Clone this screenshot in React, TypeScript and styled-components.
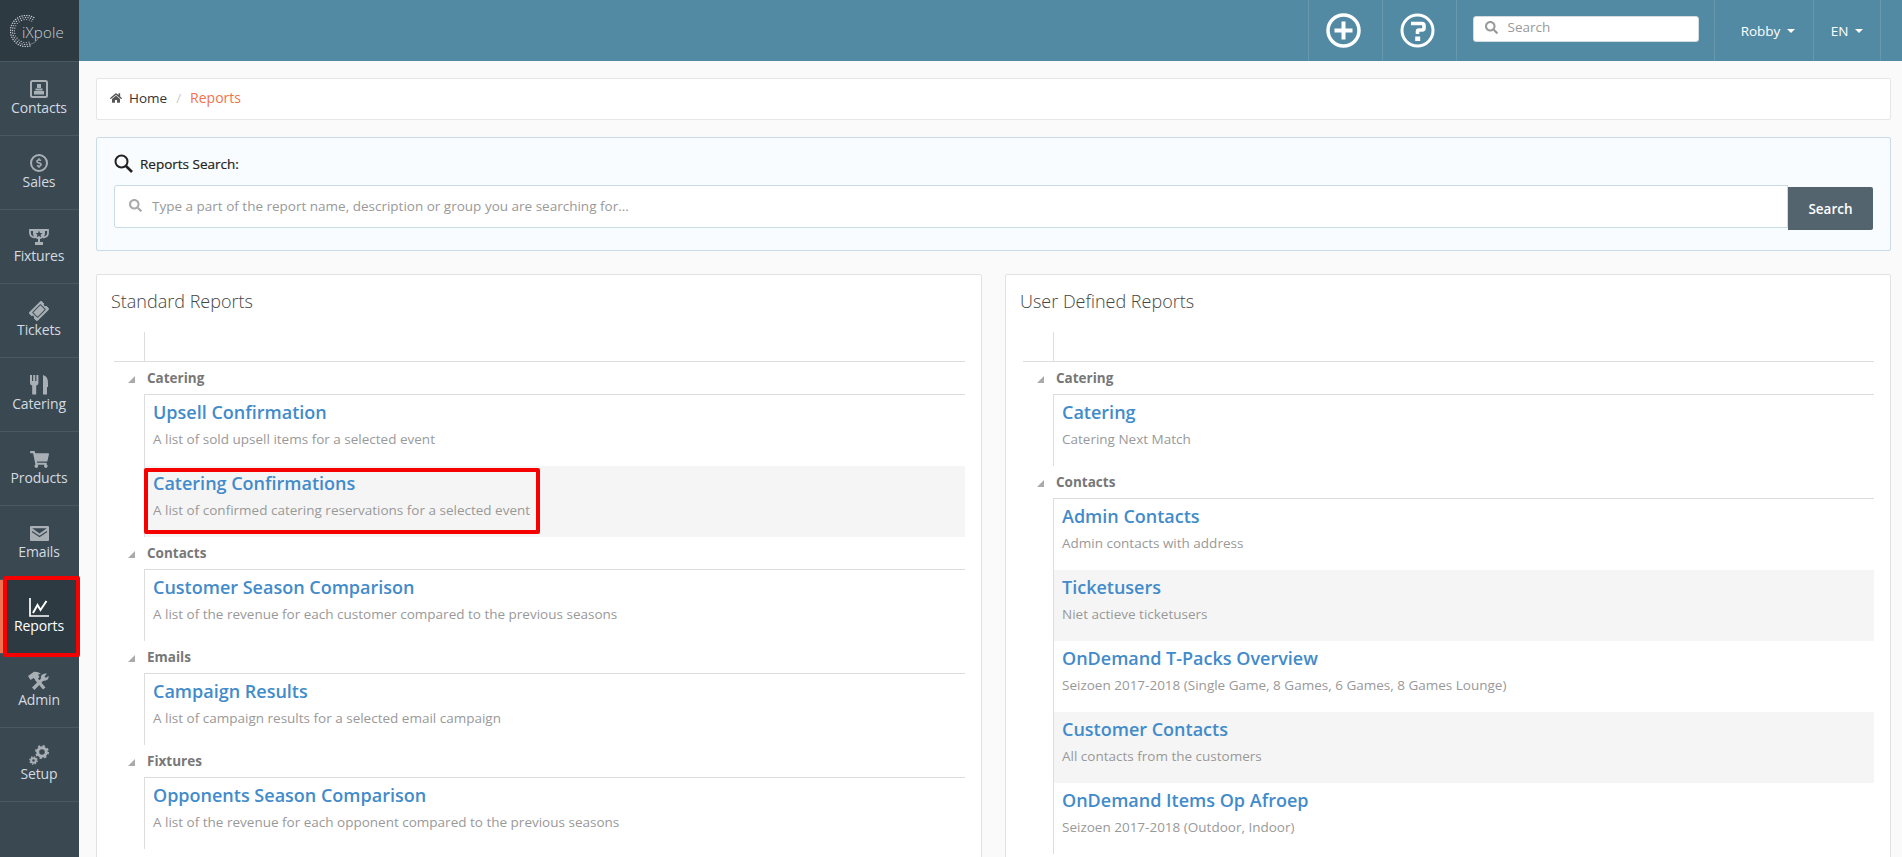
import styled, { createGlobalStyle } from "styled-components";
import { ReactNode } from "react";
import {
  FaDollarSign,
  FaHome,
  FaSearch,
  FaShoppingCart,
  FaTicketAlt,
} from "react-icons/fa";

const GlobalStyle = createGlobalStyle`
  html, body {
    margin: 0;
    height: 100%;
    background: #fafafa;
    font-family: "Open Sans", "Liberation Sans", sans-serif;
    font-size: 13.5px;
    color: #333;
  }
  * {
    box-sizing: border-box;
  }
`;

const Page = styled.div`
  display: flex;
  width: 100%;
  height: 857px;
  overflow: hidden;
`;

const Sidebar = styled.nav`
  flex: 0 0 79px;
  background: #3a4852;
  position: relative;
  z-index: 2;
`;

const LogoCell = styled.div`
  height: 62px;
  background: #2e3a42;
  display: flex;
  align-items: center;
  padding: 0 0 0 10px;
  border-bottom: 1px solid #4a5862;
  position: relative;
`;

const LogoText = styled.span`
  position: absolute;
  left: 22px;
  top: 22px;
  font-family: "Open Sans", sans-serif;
  font-weight: 300;
  font-size: 15px;
  line-height: 20px;
  letter-spacing: 0.2px;
  color: #c9ced2;
`;

const NavItem = styled.a<{ $active?: boolean }>`
  display: flex;
  flex-direction: column;
  align-items: center;
  height: 74px;
  padding: 18px 1px 0 0;
  border-bottom: 1px solid #4a5862;
  position: relative;
  font-size: 14px;
  line-height: 19px;
  letter-spacing: -0.15px;
  color: ${(p) => (p.$active ? "#fff" : "#d3dbe0")};
  background: ${(p) => (p.$active ? "#2e3a42" : "transparent")};
  box-shadow: ${(p) => (p.$active ? "inset 3px 0 0 #ef7350" : "none")};
  svg {
    display: block;
  }
`;

const NavIcon = styled.span<{ $active?: boolean }>`
  display: flex;
  align-items: center;
  justify-content: center;
  width: 24px;
  height: 18px;
  color: ${(p) => (p.$active ? "#fff" : "#a9b0b5")};
`;

const Ring = styled.span`
  display: flex;
  align-items: center;
  justify-content: center;
  width: 18px;
  height: 18px;
  border: 2px solid currentColor;
  border-radius: 50%;
`;

const TiltedTicket = styled(FaTicketAlt)`
  transform: rotate(-45deg);
`;

const RedFrame = styled.span`
  position: absolute;
  border: 4px solid #f70000;
  border-radius: 2px;
  pointer-events: none;
`;

const NavFrame = styled(RedFrame)`
  left: 3px;
  top: -4px;
  width: 77px;
  height: 81px;
`;

const Main = styled.main`
  flex: 1;
  min-width: 0;
`;

const TopBar = styled.header`
  height: 61px;
  background: #528aa3;
  display: flex;
  justify-content: flex-end;
  padding-right: 21px;
`;

const TopCell = styled.div<{ $w: number; $shift?: number }>`
  flex: 0 0 ${(p) => p.$w}px;
  border-left: 1px solid #6699ae;
  display: flex;
  align-items: center;
  justify-content: center;
  padding-left: ${(p) => (p.$shift && p.$shift > 0 ? p.$shift : 0)}px;
  padding-right: ${(p) => (p.$shift && p.$shift < 0 ? -p.$shift : 0)}px;
  color: #fff;
  font-size: 13.5px;
  gap: 7px;
`;

const SearchCell = styled(TopCell)`
  align-items: flex-start;
  padding-top: 16px;
`;

const EndCell = styled.div`
  flex: 0 0 0;
  border-left: 1px solid #6699ae;
`;

const Caret = styled.span`
  width: 0;
  height: 0;
  border-left: 4px solid transparent;
  border-right: 4px solid transparent;
  border-top: 4px solid #fff;
`;

const TopSearch = styled.label`
  width: 226px;
  height: 26px;
  background: #fff;
  border: 1px solid #d5dbdf;
  border-radius: 3px;
  display: flex;
  align-items: center;
  padding: 0 0 4px 11px;
  gap: 10px;
  color: #999;
  input {
    flex: 1;
    min-width: 0;
    border: 0;
    outline: 0;
    padding: 0;
    background: transparent;
    font: 13.5px "Open Sans", sans-serif;
    &::placeholder {
      color: #999;
      opacity: 1;
    }
  }
`;

const Content = styled.div`
  padding: 17px 11px 0 17px;
  display: flex;
  flex-direction: column;
`;

const Breadcrumb = styled.div`
  height: 42px;
  background: #fff;
  border: 1px solid #e6e6e6;
  border-radius: 2px;
  display: flex;
  align-items: center;
  padding: 0 0 3px 13px;
  font-size: 13.5px;
  color: #333;
`;

const Crumb = styled.span`
  margin-left: 7px;
`;

const CrumbSep = styled.span`
  margin: 0 9px;
  color: #ccc;
`;

const CrumbActive = styled.span`
  font-size: 14px;
  color: #ef7350;
`;

const SearchCard = styled.section`
  margin-top: 17px;
  height: 114px;
  background: #f9fcfe;
  border: 1px solid #c9dbe6;
  border-radius: 2px;
  padding: 16px 17px 0;
`;

const SearchTitle = styled.div`
  display: flex;
  align-items: center;
  gap: 7px;
  height: 19px;
  font-size: 13.5px;
  font-weight: 400;
  -webkit-text-stroke: 0.2px #222;
  color: #222;
`;

const SearchRow = styled.div`
  margin-top: 12px;
  display: flex;
  align-items: flex-start;
`;

const BigInput = styled.label`
  flex: 1;
  height: 43px;
  background: #fff;
  border: 1px solid #c9dbe6;
  border-radius: 3px 0 0 3px;
  display: flex;
  align-items: center;
  padding: 0 0 2px 14px;
  gap: 10px;
  color: #aaa;
  input {
    flex: 1;
    border: 0;
    outline: 0;
    padding: 0;
    background: transparent;
    font: 13.5px "Open Sans", sans-serif;
    &::placeholder {
      color: #999;
      opacity: 1;
    }
  }
`;

const SearchButton = styled.button`
  flex: 0 0 85px;
  height: 43px;
  margin-top: 2px;
  border: 0;
  border-radius: 0 2px 2px 0;
  background: #54646f;
  color: #fff;
  font: 600 13.5px "Open Sans", sans-serif;
`;

const Panels = styled.div`
  margin-top: 23px;
  display: grid;
  grid-template-columns: 886px 886px;
  gap: 23px;
`;

const Panel = styled.section`
  height: 640px;
  background: #fff;
  border: 1px solid #e2e2e2;
  border-radius: 2px;
  padding: 13px 16px 0 17px;
`;

const PanelTitle = styled.h2`
  margin: 0 0 0 -3px;
  height: 27px;
  font-size: 18px;
  line-height: 26px;
  font-weight: 300;
  color: #444;
`;

const TreeTop = styled.div`
  margin-top: 17px;
  height: 30px;
  border-bottom: 1px solid #ddd;
  padding-left: 30px;
  span {
    display: block;
    height: 100%;
    border-left: 1px solid #ddd;
  }
`;

const GroupHead = styled.div`
  height: 32px;
  display: flex;
  align-items: center;
  padding-left: 14px;
  font-size: 13.5px;
  font-weight: 700;
  color: #777;
`;

const Triangle = styled.span`
  width: 0;
  height: 0;
  margin-right: 12px;
  margin-top: 2px;
  border-style: solid;
  border-width: 0 0 7px 7px;
  border-color: transparent transparent #aaa transparent;
`;

const ItemList = styled.div`
  margin-left: 30px;
  border-left: 1px solid #ddd;
  border-top: 1px solid #ddd;
`;

const Item = styled.div`
  position: relative;
  height: 71px;
  padding: 3px 0 0 8px;
  &:nth-child(even) {
    background: #f5f5f5;
  }
`;

const ItemTitle = styled.a`
  display: block;
  font-size: 18px;
  line-height: 28px;
  font-weight: 600;
  color: #428bca;
`;

const ItemText = styled.p`
  margin: 3px 0 0;
  font-size: 13.5px;
  line-height: 20px;
  color: #999;
`;

const ItemFrame = styled(RedFrame)`
  left: -1px;
  top: 2px;
  width: 396px;
  height: 66px;
`;

function LogoMark() {
  const dots: ReactNode[] = [];
  [15.5, 13.5, 11.5].forEach((r, ring) => {
    const steps = 26 - ring * 4;
    for (let i = 0; i < steps; i++) {
      const a = ((75 + (i * 225) / (steps - 1)) * Math.PI) / 180;
      dots.push(
        <circle
          key={`${ring}-${i}`}
          cx={16 + r * Math.cos(a)}
          cy={16 + r * Math.sin(a)}
          r={0.75 - ring * 0.08}
          fill="#c9ced2"
        />
      );
    }
  });
  return (
    <svg width="32" height="32" viewBox="0 0 32 32">
      {dots}
      <path d="M20 29.5 A14 14 0 0 0 29 22" fill="none" stroke="#9aa3a9" strokeWidth="0.6" />
    </svg>
  );
}

function ContactsIcon() {
  return (
    <svg width="18" height="18" viewBox="0 0 18 18">
      <rect x="1" y="1" width="16" height="16" rx="1.5" fill="none" stroke="currentColor" strokeWidth="2" />
      <rect x="7" y="4" width="4" height="4" fill="currentColor" />
      <rect x="5.5" y="8.5" width="7" height="2" fill="currentColor" />
      <rect x="4" y="11" width="10" height="3.5" fill="currentColor" />
    </svg>
  );
}

function TrophyIcon() {
  return (
    <svg width="20" height="18" viewBox="0 0 20 18">
      <path d="M4 2 H1 V5 Q1 9 6 9.5" fill="none" stroke="currentColor" strokeWidth="1.8" />
      <path d="M16 2 H19 V5 Q19 9 14 9.5" fill="none" stroke="currentColor" strokeWidth="1.8" />
      <path d="M4 1 H16 V5 Q16 10 11 11 V14 H14 V17 H6 V14 H9 V11 Q4 10 4 5 Z" fill="currentColor" />
      <path d="M10 2.5 L11 5 L13.5 5.2 L11.6 6.8 L12.2 9.2 L10 7.9 L7.8 9.2 L8.4 6.8 L6.5 5.2 L9 5 Z" fill="#3a4852" />
    </svg>
  );
}

function CateringIcon() {
  return (
    <svg width="20" height="20" viewBox="0 0 20 20">
      <path d="M1 0 H3 V6 H4.2 V0 H6.2 V6 H7.4 V0 H9.4 V8 Q9.4 10 7.2 10.5 V19.5 H3.2 V10.5 Q1 10 1 8 Z" fill="currentColor" />
      <path d="M14 0 Q19 1 19 8 V12 H18 V19.5 H14 Z" fill="currentColor" />
    </svg>
  );
}

function EnvelopeIcon() {
  return (
    <svg width="19" height="15" viewBox="0 0 19 15">
      <rect x="0" y="0" width="19" height="15" rx="1" fill="currentColor" />
      <path d="M2.2 2.2 H16.8 L9.5 7.5 Z" fill="#3a4852" />
      <path d="M2 5.5 L9.5 10.5 L17 5.5" fill="none" stroke="#3a4852" strokeWidth="1.2" />
    </svg>
  );
}

function ChartIcon() {
  return (
    <svg width="20" height="19" viewBox="0 0 20 19">
      <path d="M1 0 V18 H20" fill="none" stroke="currentColor" strokeWidth="1.7" />
      <path d="M4 15 L8.5 7 L11.5 12 L17.5 3" fill="none" stroke="currentColor" strokeWidth="2" />
    </svg>
  );
}

function ToolsIcon() {
  return (
    <svg width="24" height="20" viewBox="0 0 24 20">
      <path d="M8 9 L16 18.5 L18.5 16.5 L10.5 7 Z" fill="currentColor" />
      <path d="M1 5 L7 0.8 Q11 0.5 14 3 L11 3.5 L12.5 6 L9 9.5 L6.5 7 L3.5 9 Z" fill="currentColor" />
      <path d="M5 16.5 L14 7.5 Q13 3.5 18 2.5 L20 2.8 L17.5 5.2 L19 7 L21.5 4.8 Q22.5 9.5 16 10 L7.5 19 Z" fill="currentColor" />
    </svg>
  );
}

function GearsIcon() {
  return (
    <svg width="20" height="20" viewBox="0 0 20 20">
      <circle cx="13" cy="7" r="4.3" fill="none" stroke="currentColor" strokeWidth="3" />
      <circle cx="13" cy="7" r="6" fill="none" stroke="currentColor" strokeWidth="2" strokeDasharray="2.2 2.5" />
      <circle cx="4.5" cy="15.5" r="2.3" fill="none" stroke="currentColor" strokeWidth="2" />
      <circle cx="4.5" cy="15.5" r="3.6" fill="none" stroke="currentColor" strokeWidth="1.4" strokeDasharray="1.5 1.3" />
    </svg>
  );
}

function PlusIcon() {
  return (
    <svg width="35" height="35" viewBox="0 0 35 35">
      <circle cx="17.5" cy="17.5" r="15.5" fill="none" stroke="#fff" strokeWidth="3.5" />
      <path d="M17.5 8.5 V26.5 M8.5 17.5 H26.5" stroke="#fff" strokeWidth="4" />
    </svg>
  );
}

function HelpIcon() {
  return (
    <svg width="35" height="35" viewBox="0 0 35 35">
      <circle cx="17.5" cy="17.5" r="15.5" fill="none" stroke="#fff" strokeWidth="3" />
      <path d="M11 10.5 H22 Q24 10.5 24 12.5 V15 Q24 17 22 17 H19 Q17.5 17 17.5 18.5 V21" fill="none" stroke="#fff" strokeWidth="3.6" />
      <rect x="15.2" y="23.5" width="5" height="4.5" fill="#fff" />
    </svg>
  );
}

function BigLens() {
  return (
    <svg width="19" height="19" viewBox="0 0 19 19">
      <circle cx="7.5" cy="7.5" r="6" fill="none" stroke="currentColor" strokeWidth="2" />
      <path d="M12 12 L18 18" stroke="currentColor" strokeWidth="2.6" />
    </svg>
  );
}

const navItems: { label: string; icon: ReactNode; active?: boolean }[] = [
  { label: "Contacts", icon: <ContactsIcon /> },
  { label: "Sales", icon: <Ring><FaDollarSign size={10} /></Ring> },
  { label: "Fixtures", icon: <TrophyIcon /> },
  { label: "Tickets", icon: <TiltedTicket size={18} /> },
  { label: "Catering", icon: <CateringIcon /> },
  { label: "Products", icon: <FaShoppingCart size={19} /> },
  { label: "Emails", icon: <EnvelopeIcon /> },
  { label: "Reports", icon: <ChartIcon />, active: true },
  { label: "Admin", icon: <ToolsIcon /> },
  { label: "Setup", icon: <GearsIcon /> },
];

type Report = { title: string; text: string; marked?: boolean };
type Group = { name: string; items: Report[] };

const standardReports: Group[] = [
  {
    name: "Catering",
    items: [
      { title: "Upsell Confirmation", text: "A list of sold upsell items for a selected event" },
      { title: "Catering Confirmations", text: "A list of confirmed catering reservations for a selected event", marked: true },
    ],
  },
  {
    name: "Contacts",
    items: [
      { title: "Customer Season Comparison", text: "A list of the revenue for each customer compared to the previous seasons" },
    ],
  },
  {
    name: "Emails",
    items: [
      { title: "Campaign Results", text: "A list of campaign results for a selected email campaign" },
    ],
  },
  {
    name: "Fixtures",
    items: [
      { title: "Opponents Season Comparison", text: "A list of the revenue for each opponent compared to the previous seasons" },
    ],
  },
];

const userReports: Group[] = [
  {
    name: "Catering",
    items: [{ title: "Catering", text: "Catering Next Match" }],
  },
  {
    name: "Contacts",
    items: [
      { title: "Admin Contacts", text: "Admin contacts with address" },
      { title: "Ticketusers", text: "Niet actieve ticketusers" },
      { title: "OnDemand T-Packs Overview", text: "Seizoen 2017-2018 (Single Game, 8 Games, 6 Games, 8 Games Lounge)" },
      { title: "Customer Contacts", text: "All contacts from the customers" },
      { title: "OnDemand Items Op Afroep", text: "Seizoen 2017-2018 (Outdoor, Indoor)" },
    ],
  },
];

function ReportPanel({ title, groups }: { title: string; groups: Group[] }) {
  return (
    <Panel>
      <PanelTitle>{title}</PanelTitle>
      <TreeTop>
        <span />
      </TreeTop>
      {groups.map((group) => (
        <div key={group.name}>
          <GroupHead>
            <Triangle />
            {group.name}
          </GroupHead>
          <ItemList>
            {group.items.map((item) => (
              <Item key={item.title}>
                <ItemTitle>{item.title}</ItemTitle>
                <ItemText>{item.text}</ItemText>
                {item.marked && <ItemFrame />}
              </Item>
            ))}
          </ItemList>
        </div>
      ))}
    </Panel>
  );
}

function App() {
  return (
    <Page>
      <GlobalStyle />
      <Sidebar>
        <LogoCell>
          <LogoMark />
          <LogoText>iXpole</LogoText>
        </LogoCell>
        {navItems.map((item) => (
          <NavItem key={item.label} $active={item.active}>
            <NavIcon $active={item.active}>{item.icon}</NavIcon>
            {item.label}
            {item.active && <NavFrame />}
          </NavItem>
        ))}
      </Sidebar>
      <Main>
        <TopBar>
          <TopCell $w={74} $shift={-4}>
            <PlusIcon />
          </TopCell>
          <TopCell $w={74} $shift={-4}>
            <HelpIcon />
          </TopCell>
          <SearchCell $w={258}>
            <TopSearch>
              <FaSearch size={13} />
              <input placeholder="Search" />
            </TopSearch>
          </SearchCell>
          <TopCell $w={99} $shift={8}>
            Robby <Caret />
          </TopCell>
          <TopCell $w={67}>
            EN <Caret />
          </TopCell>
          <EndCell />
        </TopBar>
        <Content>
          <Breadcrumb>
            <FaHome size={12} color="#555" />
            <Crumb>Home</Crumb>
            <CrumbSep>/</CrumbSep>
            <CrumbActive>Reports</CrumbActive>
          </Breadcrumb>
          <SearchCard>
            <SearchTitle>
              <BigLens />
              Reports Search:
            </SearchTitle>
            <SearchRow>
              <BigInput>
                <FaSearch size={13} />
                <input placeholder="Type a part of the report name, description or group you are searching for..." />
              </BigInput>
              <SearchButton>Search</SearchButton>
            </SearchRow>
          </SearchCard>
          <Panels>
            <ReportPanel title="Standard Reports" groups={standardReports} />
            <ReportPanel title="User Defined Reports" groups={userReports} />
          </Panels>
        </Content>
      </Main>
    </Page>
  );
}

export default App;
